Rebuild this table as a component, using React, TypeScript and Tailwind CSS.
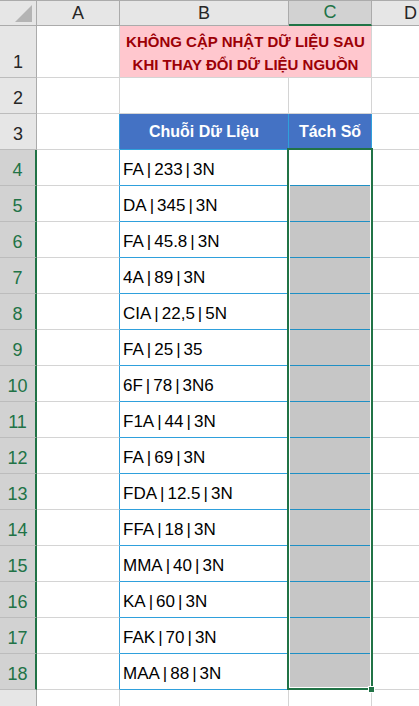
const data = [
  "FA|233|3N",
  "DA|345|3N",
  "FA|45.8|3N",
  "4A|89|3N",
  "CIA|22,5|5N",
  "FA|25|35",
  "6F|78|3N6",
  "F1A|44|3N",
  "FA|69|3N",
  "FDA|12.5|3N",
  "FFA|18|3N",
  "MMA|40|3N",
  "KA|60|3N",
  "FAK|70|3N",
  "MAA|88|3N",
];

function RowHead({ n, selected }: { n?: number; selected?: boolean }) {
  return (
    <div
      className={
        selected
          ? "w-[37px] shrink-0 border-b border-b-[#bcbcbc] border-r-2 border-r-[#217346] bg-[#d2d2d2] text-[#217346] flex items-end justify-center pb-[1px] text-[18px]"
          : "w-[37px] shrink-0 border-b border-r border-b-[#bcbcbc] border-r-[#ababab] bg-[#e6e6e6] text-[#262626] flex items-end justify-center pb-[1px] text-[18px]"
      }
    >
      {n}
    </div>
  );
}

function Piped({ text }: { text: string }) {
  const parts = text.split("|");
  return (
    <>
      {parts.map((p, i) => (
        <span key={i}>
          {i > 0 && <span className="mx-[3px]">|</span>}
          {p}
        </span>
      ))}
    </>
  );
}

export default function App() {
  return (
    <div className="relative w-[419px] h-[706px] overflow-hidden bg-white font-['Liberation_Sans',Arial,sans-serif] text-black">
      {/* column headers */}
      <div className="flex h-[26px] border-t border-[#ababab]">
        <div className="w-[37px] shrink-0 border-b border-r border-[#ababab] bg-[#e6e6e6] flex items-end justify-end pr-[4px] pb-[3px]">
          <div className="w-0 h-0 border-l-[17px] border-l-transparent border-b-[17px] border-b-[#b4b4b4]" />
        </div>
        <div className="w-[83px] shrink-0 border-b border-r border-[#ababab] bg-[#e6e6e6] flex items-center justify-center text-[18px] text-[#262626]">A</div>
        <div className="w-[169px] shrink-0 border-b border-r border-[#ababab] bg-[#e6e6e6] flex items-center justify-center text-[18px] text-[#262626]">B</div>
        <div className="w-[83px] shrink-0 border-b-2 border-b-[#217346] border-r border-r-[#ababab] bg-[#d2d2d2] flex items-center justify-center text-[18px] text-[#217346]">C</div>
        <div className="flex-1 border-b border-[#ababab] bg-[#e6e6e6] flex items-center pl-[32px] text-[18px] text-[#262626]">D</div>
      </div>

      {/* row 1 */}
      <div className="flex h-[52px]">
        <RowHead n={1} />
        <div className="w-[83px] shrink-0 border-b border-r border-[#d4d4d4]" />
        <div className="w-[252px] shrink-0 border-b border-r border-[#d4d4d4] bg-[#ffc7ce] flex flex-col items-center justify-center pt-[2px] text-[15px] font-bold leading-[23px] text-[#9c0006]">
          <span>KHÔNG CẬP NHẬT DỮ LIỆU SAU</span>
          <span>KHI THAY ĐỔI DỮ LIỆU NGUỒN</span>
        </div>
        <div className="flex-1 border-b border-[#d4d4d4]" />
      </div>

      {/* row 2 */}
      <div className="flex h-[36px]">
        <RowHead n={2} />
        <div className="w-[83px] shrink-0 border-b border-r border-[#d4d4d4]" />
        <div className="w-[169px] shrink-0 border-b border-r border-[#d4d4d4]" />
        <div className="w-[83px] shrink-0 border-b border-r border-[#d4d4d4]" />
        <div className="flex-1 border-b border-[#d4d4d4]" />
      </div>

      {/* row 3 */}
      <div className="flex h-[36px]">
        <RowHead n={3} />
        <div className="w-[83px] shrink-0 border-b border-b-[#d4d4d4] border-r border-r-[#2fa0dc]" />
        <div className="w-[169px] shrink-0 border-b border-r border-[#2fa0dc] bg-[#4472c4] flex items-center justify-center text-[16px] font-bold text-white">
          Chuỗi Dữ Liệu
        </div>
        <div className="w-[83px] shrink-0 border-b border-r border-[#2fa0dc] bg-[#4472c4] flex items-center justify-center text-[16px] font-bold text-white">
          Tách Số
        </div>
        <div className="flex-1 border-b border-[#d4d4d4]" />
      </div>

      {/* data rows */}
      {data.map((s, i) => (
        <div key={i} className="flex h-[36px]">
          <RowHead n={i + 4} selected />
          <div className="w-[83px] shrink-0 border-b border-b-[#d4d4d4] border-r border-r-[#2fa0dc]" />
          <div className="w-[169px] shrink-0 border-b border-r border-[#2fa0dc] flex items-end pl-[3px] pb-[4px] text-[17px] leading-[22px]">
            <Piped text={s} />
          </div>
          <div
            className={
              i === 0
                ? "w-[83px] shrink-0 border-b border-r border-[#1f8fc4] bg-white"
                : "w-[83px] shrink-0 border-b border-r border-[#1f8fc4] bg-[#c6c6c6]"
            }
          />
          <div className="flex-1 border-b border-[#d4d4d4]" />
        </div>
      ))}

      {/* row 19 */}
      <div className="flex h-[36px]">
        <RowHead />
        <div className="w-[83px] shrink-0 border-r border-[#d4d4d4]" />
        <div className="w-[169px] shrink-0 border-r border-[#d4d4d4]" />
        <div className="w-[83px] shrink-0 border-r border-[#d4d4d4]" />
        <div className="flex-1" />
      </div>

      {/* selection */}
      <div className="absolute left-[287px] top-[148px] w-[86px] h-[542px] border-2 border-[#217346] shadow-[inset_0_0_0_1px_white]" />
      <div className="absolute left-[368px] top-[686px] w-[7px] h-[7px] bg-[#217346] border border-white" />
    </div>
  );
}
